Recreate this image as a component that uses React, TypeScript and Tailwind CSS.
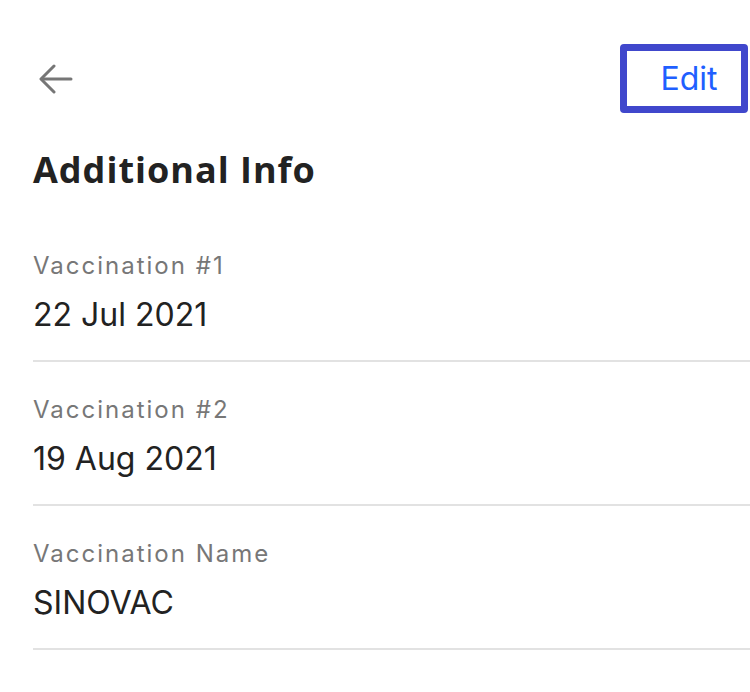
const FIELDS = [
  { label: "Vaccination #1", value: "22 Jul 2021" },
  { label: "Vaccination #2", value: "19 Aug 2021" },
  { label: "Vaccination Name", value: "SINOVAC" },
];

function BackArrow() {
  return (
    <svg width="34" height="30" viewBox="0 0 34 30" fill="none" stroke="#767676" strokeWidth="3" strokeLinecap="round" strokeLinejoin="round" aria-hidden>
      <path d="M32 15H3" />
      <path d="M15 2 2 15l13 13" />
    </svg>
  );
}

export default function App() {
  return (
    <div className="min-h-[692px] w-[750px] bg-white font-['Inter','Liberation_Sans',sans-serif] text-[#222]">
      <div className="flex h-[113px] items-end justify-between pl-[39px] pr-[2px]">
        <div className="flex h-[69px] items-center">
          <BackArrow />
        </div>
        <button className="flex h-[69px] w-[128px] items-center justify-center rounded-[4px] border-[7px] border-[#4047cc] pl-[10px] text-[32px] text-[#1f5fff]">
          Edit
        </button>
      </div>

      <h1 className="mt-[35px] pl-[33px] font-['Open_Sans','Noto_Sans',sans-serif] text-[36px] font-bold leading-[44px] tracking-[1px] text-[#222]">
        Additional Info
      </h1>

      <div className="mt-[26px] pl-[33px]">
        {FIELDS.map((f) => (
          <div key={f.label} className="border-b-2 border-[#e2e2e2] pb-[27px] pt-[32px]">
            <p className="text-[24px] leading-[32px] tracking-[2px] text-[#777]">{f.label}</p>
            <p className="mt-[15px] text-[32px] leading-[36px] text-[#222]">{f.value}</p>
          </div>
        ))}
      </div>
    </div>
  );
}
